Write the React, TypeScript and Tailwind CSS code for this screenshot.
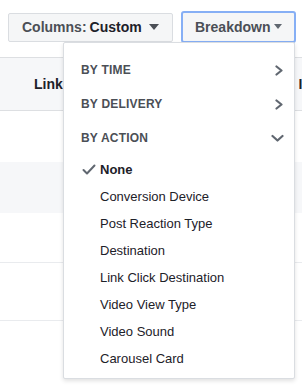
import React from "react";

const Caret = ({ w, h, color }: { w: number; h: number; color: string }) => (
  <svg width={w} height={h} viewBox={`0 0 ${w} ${h}`}>
    <polygon points={`0,0 ${w},0 ${w / 2},${h}`} fill={color} />
  </svg>
);

const ChevronRight = () => (
  <svg width="9" height="11" viewBox="0 0 9 11">
    <polyline points="1.5,1.5 6.5,5.5 1.5,9.5" fill="none" stroke="#606770" strokeWidth="2.2" strokeLinecap="round" strokeLinejoin="round" />
  </svg>
);

const ChevronDown = () => (
  <svg width="13" height="9" viewBox="0 0 13 9">
    <polyline points="1.5,2 6.5,6.5 11.5,2" fill="none" stroke="#606770" strokeWidth="2.2" strokeLinecap="round" strokeLinejoin="round" />
  </svg>
);

const Check = () => (
  <svg width="14" height="11" viewBox="0 0 14 11">
    <polyline points="1.5,6 5,9.5 12.5,1.5" fill="none" stroke="#606770" strokeWidth="2" strokeLinecap="round" strokeLinejoin="round" />
  </svg>
);

const items = [
  "Conversion Device",
  "Post Reaction Type",
  "Destination",
  "Link Click Destination",
  "Video View Type",
  "Video Sound",
  "Carousel Card",
];

export default function App() {
  return (
    <div
      className="relative w-[302px] h-[388px] overflow-hidden bg-white"
      style={{ fontFamily: '"Liberation Sans", Helvetica, Arial, sans-serif' }}
    >
      {/* toolbar */}
      <div className="flex h-[57px] pl-[8px] pt-[13px] items-start">
        <div className="flex items-center w-[165px] h-[29px] bg-[#f5f6f7] border border-[#dadde1] rounded-[2px] pl-[13px] text-[14px] font-bold">
          <span className="text-[#4b4f56]">Columns:</span>
          <span className="text-[#1d2129] ml-[3px]">Custom</span>
          <span className="ml-[7px] mt-[-2px]">
            <Caret w={10} h={6} color="#4b4f56" />
          </span>
        </div>
        <div className="ml-[8px] mt-[-2px] flex items-center w-[115px] h-[32px] bg-[#f5f6f7] border-2 border-[#86aff5] rounded-[3px] pl-[12px] text-[14px] font-bold text-[#4b4f56]">
          <span>Breakdown</span>
          <span className="ml-[4px] mt-[-1px]">
            <Caret w={8} h={5} color="#606770" />
          </span>
        </div>
      </div>

      {/* table header */}
      <div className="h-[54px] bg-[#f6f7f9] border-t border-b border-[#dddfe2] flex items-center justify-between">
        <span className="ml-[34px] text-[14px] font-bold text-[#1d2129]">Link</span>
        <span className="mr-[-9px] text-[14px] font-bold text-[#1d2129]">In</span>
      </div>
      <div className="h-[51px] bg-white" />
      <div className="h-[51px] bg-[#f6f7f9]" />
      <div className="h-[50px] bg-white border-b border-[#e9ebee]" />
      <div className="h-[58px] bg-white border-b border-[#e9ebee]" />

      {/* dropdown menu */}
      <div className="absolute left-[63px] top-[42px] w-[232px] h-[337px] bg-white border border-[#dadde1] rounded-[2px] shadow-[0_2px_4px_rgba(0,0,0,0.12)] pt-[10px]">
        {["BY TIME", "BY DELIVERY", "BY ACTION"].map((t, i) => (
          <div key={t} className="flex items-center justify-between h-[34px] pl-[17px] pr-[10px]">
            <span className="text-[12px] font-bold text-[#4b4f56] tracking-[0.2px]">{t}</span>
            {i < 2 ? <ChevronRight /> : <ChevronDown />}
          </div>
        ))}
        <div className="mt-[1px] flex items-center h-[27px] pl-[18px]">
          <Check />
          <span className="ml-[4px] text-[13px] font-bold text-[#1d2129]">None</span>
        </div>
        {items.map((t) => (
          <div key={t} className="flex items-center h-[27px] pl-[36px] text-[13px] text-[#1d2129]">
            {t}
          </div>
        ))}
      </div>
    </div>
  );
}
